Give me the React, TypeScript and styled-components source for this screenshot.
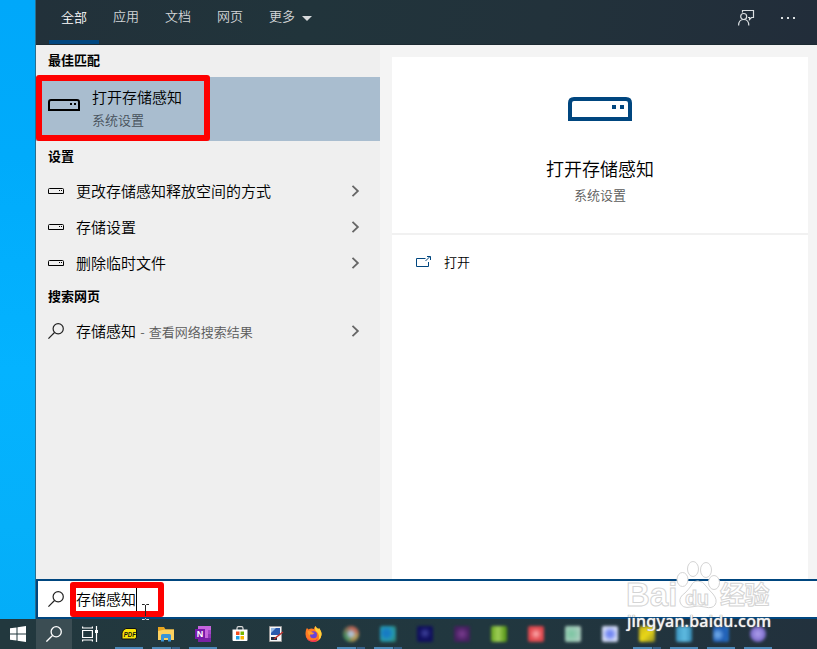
import React from "react";
import styled, { createGlobalStyle } from "styled-components";

const Global = createGlobalStyle`
  * { box-sizing: border-box; }
  html, body { margin: 0; padding: 0; overflow: hidden; }
  body { font-family: "Noto Sans CJK SC", sans-serif; font-weight: 350; color: #000; }
  svg { display: block; flex: none; }
`;

const Screen = styled.div`
  position: relative;
  width: 817px;
  height: 649px;
  overflow: hidden;
  display: flex;
  flex-direction: column;
`;

const Desktop = styled.div`
  height: 619px;
  padding-left: 35px;
  background: linear-gradient(180deg, #00a8fa 0, #00abfb 25%, #04b3ff 60%, #05b0fa 85%, #04adf8 100%);
`;

const SearchWindow = styled.main`
  height: 619px;
  border-left: 1px solid #2b6e8e;
  display: flex;
  flex-direction: column;
`;

const Header = styled.header`
  height: 45px;
  flex: none;
  display: flex;
  justify-content: space-between;
  padding: 0 21px 0 13px;
  background: linear-gradient(100deg, #22313a 0, #21343b 35%, #22323b 65%, #222d3a 100%);
  border-bottom: 1px solid #1c2a32;
`;

const Tabs = styled.nav`
  display: flex;
  height: 44px;
  gap: 2px;
`;

const Tab = styled.div<{ $active?: boolean }>`
  height: 44px;
  padding: ${(p) => (p.$active ? 8 : 7)}px 12px 0;
  display: flex;
  align-items: flex-start;
  gap: 7px;
  font-size: 13px;
  line-height: 18px;
  color: ${(p) => (p.$active ? "#fff" : "#d3d6d8")};
  border-bottom: 4px solid ${(p) => (p.$active ? "#00467f" : "transparent")};
`;

const TabArrow = styled.svg`
  margin-top: 9px;
`;

const HeaderTools = styled.div`
  display: flex;
  gap: 25px;
  padding-top: 9px;
`;

const Body = styled.div`
  height: 534px;
  flex: none;
  display: flex;
  background: #f4f4f4;
`;

const Results = styled.section`
  width: 344px;
  background: #efefef;
`;

const SectionTitle = styled.h2`
  margin: 0;
  height: 32px;
  padding-left: 12px;
  font-size: 13px;
  font-weight: 700;
  line-height: 29px;
`;

const BestMatch = styled.div`
  height: 64px;
  padding: 8px 12px 0;
  display: flex;
  gap: 12px;
  background: #a9bdcf;
`;

const BestIcon = styled.div`
  padding-top: 14px;
`;

const BestTitle = styled.div`
  font-size: 15px;
  line-height: 24px;
`;

const BestSub = styled.div`
  font-size: 13px;
  line-height: 22px;
  color: #46505a;
`;

const ResultRow = styled.div`
  height: 36px;
  padding: 0 20px 0 12px;
  display: flex;
  align-items: center;
`;

const RowLabel = styled.div`
  flex: 1;
  padding-left: 12px;
  font-size: 15px;
  line-height: 36px;
  height: 36px;
  white-space: pre;
`;

const Hint = styled.span`
  font-size: 13px;
  color: #5a5a5a;
  word-spacing: 1.3px;
`;

const Preview = styled.section`
  width: 416px;
  margin: 12px 0 0 12px;
  background: #fff;
`;

const PreviewHero = styled.div`
  height: 178px;
  padding-top: 40px;
  display: flex;
  flex-direction: column;
  align-items: center;
  border-bottom: 2px solid #f1f1f1;
`;

const PreviewTitle = styled.div`
  margin-top: 33px;
  font-size: 18px;
  line-height: 28px;
`;

const PreviewSub = styled.div`
  font-size: 13px;
  line-height: 26px;
  color: #5a5a5a;
`;

const Action = styled.div`
  height: 54px;
  padding-left: 24px;
  display: flex;
  align-items: center;
  gap: 13px;
  font-size: 13px;
  line-height: 54px;
`;

const SearchBar = styled.div`
  height: 40px;
  flex: none;
  border: 2px solid #00467f;
  border-right: 0;
  background: #fff;
  padding-left: 10px;
  display: flex;
  align-items: center;
  gap: 12px;
`;

const Query = styled.div`
  height: 24px;
  border-right: 1px solid #000;
  font-size: 15px;
  line-height: 24px;
`;

const Taskbar = styled.footer`
  height: 30px;
  display: flex;
  background: linear-gradient(90deg, #22383e 0, #21373f 60%, #22313d 100%);
`;

const SystemCell = styled.div<{ $lit?: boolean }>`
  width: 36px;
  height: 30px;
  display: flex;
  align-items: center;
  justify-content: center;
  background: ${(p) => (p.$lit ? "#3b4d53" : "transparent")};
`;

const Apps = styled.div`
  display: flex;
  padding-left: 2px;
`;

const AppCell = styled.div`
  width: 37px;
  height: 30px;
  display: flex;
  flex-direction: column;
  align-items: center;
  justify-content: space-between;
  padding-top: 7px;
`;

const RunMark = styled.div<{ $kind: "none" | "one" | "stack" }>`
  width: 28px;
  height: 2px;
  background: ${(p) =>
    p.$kind === "none"
      ? "transparent"
      : p.$kind === "one"
      ? "#4c89ba"
      : "linear-gradient(90deg, #4c89ba 0 19px, #29465a 19px 20px, #36618a 20px)"};
`;

const Blob = styled.div<{ $bg: string; $round?: boolean }>`
  width: 16px;
  height: 16px;
  border-radius: ${(p) => (p.$round ? "50%" : "2px")};
  background: ${(p) => p.$bg};
  filter: blur(1.6px);
`;

const Highlight = styled.div<{ $x: number; $y: number; $w: number; $h: number }>`
  position: absolute;
  left: ${(p) => p.$x}px;
  top: ${(p) => p.$y}px;
  width: ${(p) => p.$w}px;
  height: ${(p) => p.$h}px;
  border: 6px solid #fe0000;
  border-radius: 3px;
`;

const Pointer = styled.svg`
  position: absolute;
  left: 141px;
  top: 603px;
`;

const Watermark = styled.div`
  position: absolute;
  left: 626px;
  top: 560px;
  width: 150px;
  height: 72px;
`;

const MarkPaw = styled.svg`
  position: absolute;
  left: 49px;
  top: 0;
`;

const MarkText = styled.span<{ $x: number; $y: number; $size: number; $gap?: number }>`
  position: absolute;
  left: ${(p) => p.$x}px;
  top: ${(p) => p.$y}px;
  font-family: "Liberation Sans", "Noto Sans CJK SC", sans-serif;
  font-weight: 700;
  font-size: ${(p) => p.$size}px;
  line-height: 26px;
  letter-spacing: ${(p) => p.$gap || 0}px;
  color: #fff;
  -webkit-text-stroke: 1px #d4d4d4;
  white-space: nowrap;
`;

const MarkUrl = styled.span`
  position: absolute;
  left: 1px;
  top: 51px;
  font-family: "Noto Sans", sans-serif;
  font-size: 16px;
  font-weight: 500;
  line-height: 20px;
  letter-spacing: 0.2px;
  color: #f4f4f4;
  text-shadow: 0 0 1px #999, 0 0 1px #999;
  white-space: nowrap;
`;

function DriveIcon({ size, color }: { size: "s" | "m" | "l"; color: string }) {
  if (size === "l")
    return (
      <svg width="64" height="24" viewBox="0 0 64 24">
        <path d="M2 22V6q0-4 4-4h52q4 0 4 4v16z" fill="none" stroke={color} strokeWidth="4" />
        <path d="M44 8h4v4h-4zM52 8h4v4h-4z" fill={color} />
      </svg>
    );
  if (size === "m")
    return (
      <svg width="32" height="12" viewBox="0 0 32 12">
        <path d="M1 11V3q0-2 2-2h26q2 0 2 2v8z" fill="none" stroke={color} strokeWidth="2" />
        <path d="M22 4h2v2h-2zM26 4h2v2h-2z" fill={color} />
      </svg>
    );
  return (
    <svg width="16" height="6" viewBox="0 0 16 6">
      <path d="M.5 5.5V1.5q0-1 1-1h13q1 0 1 1v4z" fill="none" stroke={color} />
      <path d="M11 2h1v1h-1zM13 2h1v1h-1z" fill={color} />
    </svg>
  );
}

function Magnifier({ color, width = 1.2 }: { color: string; width?: number }) {
  return (
    <svg width="16" height="16" viewBox="0 0 16 16" fill="none" stroke={color} strokeWidth={width}>
      <circle cx="10.2" cy="5.8" r="5.1" />
      <path d="M6.5 9.5.4 15.6" />
    </svg>
  );
}

function Chevron() {
  return (
    <svg width="9" height="12" viewBox="0 0 9 12">
      <path d="m1.5 .8 5.4 5.2-5.4 5.2" fill="none" stroke="#666" strokeWidth="1.8" />
    </svg>
  );
}

function PdfIcon() {
  return (
    <svg width="16" height="16" viewBox="0 0 16 16">
      <path d="M5 2.500h9q1.500 0 1.500 1.500v7q0 2-2 2H1V7q1-4 4-4.500" fill="#f8e408" stroke="#111" />
      <text x="2.800" y="11" fontFamily="Liberation Sans" fontSize="7" fontStyle="italic" fontWeight="700" fill="#111" textLength="12" lengthAdjust="spacingAndGlyphs">PDF</text>
    </svg>
  );
}

function FolderIcon() {
  return (
    <svg width="18" height="16" viewBox="0 0 18 16">
      <path d="M1 1h6l1.500 2.500H17V7H1z" fill="#e9a51e" />
      <path d="M1 5l7-1.500h9V14H1z" fill="#fcd160" />
      <path d="M4 15.500V9.500q0-1.500 1.500-1.500h7q1.500 0 1.500 1.500v6h-3V12H7v3.500z" fill="#3a94d8" />
    </svg>
  );
}

function OneNoteIcon() {
  return (
    <svg width="16" height="16" viewBox="0 0 16 16">
      <path d="M3 0h13v16H3z" fill="#c665dd" />
      <path d="M13 4h3v4h-3z" fill="#a548c9" />
      <path d="M13 8h3v4h-3z" fill="#8f38b7" />
      <path d="M3 12h13v4H3z" fill="#7922a5" />
      <path d="M0 3h10v10H0z" fill="#7719aa" />
      <text x="1.800" y="11.300" fontFamily="Liberation Sans" fontSize="9" fontWeight="700" fill="#fff">N</text>
    </svg>
  );
}

function StoreIcon() {
  return (
    <svg width="16" height="16" viewBox="0 0 16 16">
      <path d="M5 4V2.200Q5 .7 6.500.7h3q1.500 0 1.500 1.500V4" fill="none" stroke="#ddd" strokeWidth="1.200" />
      <path d="M.5 3.500h15V14q0 1-1 1h-13q-1 0-1-1z" fill="#fff" />
      <path d="M4 5.500h3.500V9H4z" fill="#f04c1f" />
      <path d="M8.500 5.500H12V9H8.500z" fill="#78b800" />
      <path d="M4 10h3.500v3.500H4z" fill="#1ba0e8" />
      <path d="M8.500 10H12v3.500H8.500z" fill="#f8b400" />
    </svg>
  );
}

function RunIcon() {
  return (
    <svg width="17" height="16" viewBox="0 0 17 16">
      <path d="M1.500.5h12v15h-12z" fill="#f4f6f8" stroke="#999" />
      <path d="M3 2h9v7H3z" fill="#2959ad" />
      <path d="M3 2h5L3 7z" fill="#94b8e3" />
      <path d="M3 11h6v3H3z" fill="#202b44" />
      <path d="m6 13 9-7" stroke="#bd302d" strokeWidth="1.500" />
    </svg>
  );
}

function FirefoxIcon() {
  return (
    <svg width="17" height="16" viewBox="0 0 17 16">
      <path d="M1 4q.5-1.500 1-2l1.500 1.500Q6 2 9 3 9 1 10.500 0q1 2.500 3 3l.5-1q3 4 2.500 7-1 7-8 7-8-1-8-8Q.5 6 1 4" fill="#ff7a24" />
      <path d="M10.500 0q1 2.500 3 3l.5-1q3 4 2.500 7-.5 3.500-3 5 1.500-5-1.500-8Q9 4 10.500 0" fill="#ffd338" />
      <path d="M.7 8q1 6 6 6.500 4 .5 6-2-1 3.500-4.500 3.500-7-1-7.500-8" fill="#ef2a5b" />
      <circle cx="8.500" cy="8.700" r="3.500" fill="#6a43d8" />
      <path d="M2.500 5q3-.5 5 1.500l2 .5-2 1.500H6Q4 8 5 10 2.500 8 2.500 5" fill="#ff9c2a" />
    </svg>
  );
}

type Mark = "none" | "one" | "stack";

const apps: { icon: React.ReactNode; mark: Mark }[] = [
  { icon: <PdfIcon />, mark: "one" },
  { icon: <FolderIcon />, mark: "stack" },
  { icon: <OneNoteIcon />, mark: "one" },
  { icon: <StoreIcon />, mark: "none" },
  { icon: <RunIcon />, mark: "none" },
  { icon: <FirefoxIcon />, mark: "none" },
  {
    icon: <Blob $round $bg="radial-gradient(circle, #aebfd2 0 20%, transparent 45%), conic-gradient(#bd6754 0 17%, #b59a55 30%, #a88f4e 45%, #4b9260 60%, #508458 75%, #b66152)" />,
    mark: "stack",
  },
  { icon: <Blob $bg="radial-gradient(circle at 40% 45%, #177cc3 0 25%, #2398b4 50%, #2f8778 85%)" />, mark: "stack" },
  { icon: <Blob $bg="radial-gradient(circle at 50% 45%, #4144a0, #10105e 50%)" />, mark: "none" },
  { icon: <Blob $bg="radial-gradient(circle, #7d3d91, #44205f 65%)" />, mark: "none" },
  { icon: <Blob $bg="linear-gradient(90deg, #67a51f, #a0cf58 45%, #4c8d0e)" />, mark: "none" },
  { icon: <Blob $bg="radial-gradient(circle, #ffb1b1, #e34f55 50%, #d33b40)" />, mark: "none" },
  { icon: <Blob $bg="radial-gradient(circle at 40% 50%, #78c5a0, #a4cdbb 65%, #c1d0ca)" />, mark: "none" },
  { icon: <Blob $bg="radial-gradient(circle, #7186f4 0 20%, #d4dcf7 65%)" />, mark: "none" },
  { icon: <Blob $bg="linear-gradient(135deg, #c6b218, #ead817 50%, #918d23)" />, mark: "stack" },
  { icon: <Blob $bg="linear-gradient(90deg, #3c96c1, #60bce2 55%, #348ab5)" />, mark: "one" },
  { icon: <Blob $bg="radial-gradient(circle at 30% 55%, #6aa5e6 0 12%, #1d5cb4 50%, #2b78c5)" />, mark: "one" },
  { icon: <Blob $round $bg="radial-gradient(circle, #b0a1ee, #7464c5 75%)" />, mark: "one" },
];

const settings = ["更改存储感知释放空间的方式", "存储设置", "删除临时文件"];

export default function App() {
  return (
    <Screen>
      <Global />
      <Desktop>
        <SearchWindow>
          <Header>
            <Tabs>
              <Tab $active>全部</Tab>
              <Tab>应用</Tab>
              <Tab>文档</Tab>
              <Tab>网页</Tab>
              <Tab>
                更多
                <TabArrow width="10" height="5" viewBox="0 0 10 5">
                  <path d="M0 0h10L5 5z" fill="#d7dadc" />
                </TabArrow>
              </Tab>
            </Tabs>
            <HeaderTools>
              <svg width="17" height="17" viewBox="0 0 17 17" fill="none" stroke="#dce0e2" strokeWidth="1.2">
                <path d="M4.500 3.500v-2h11v7h-2l-2 2v-2H10" />
                <circle cx="5.700" cy="7.500" r="3" />
                <path d="M.6 16.500q0-6 5.100-6t5.100 6" />
              </svg>
              <svg width="16" height="17" viewBox="0 0 16 17">
                <path d="M1 8h2v2H1zM7 8h2v2H7zM13 8h2v2h-2z" fill="#dce0e2" />
              </svg>
            </HeaderTools>
          </Header>
          <Body>
            <Results>
              <SectionTitle>最佳匹配</SectionTitle>
              <BestMatch>
                <BestIcon>
                  <DriveIcon size="m" color="#000" />
                </BestIcon>
                <div>
                  <BestTitle>打开存储感知</BestTitle>
                  <BestSub>系统设置</BestSub>
                </div>
              </BestMatch>
              <SectionTitle>设置</SectionTitle>
              {settings.map((label) => (
                <ResultRow key={label}>
                  <DriveIcon size="s" color="#000" />
                  <RowLabel>{label}</RowLabel>
                  <Chevron />
                </ResultRow>
              ))}
              <SectionTitle>搜索网页</SectionTitle>
              <ResultRow>
                <Magnifier color="#222" />
                <RowLabel>
                  存储感知<Hint> - 查看网络搜索结果</Hint>
                </RowLabel>
                <Chevron />
              </ResultRow>
            </Results>
            <Preview>
              <PreviewHero>
                <DriveIcon size="l" color="#00467f" />
                <PreviewTitle>打开存储感知</PreviewTitle>
                <PreviewSub>系统设置</PreviewSub>
              </PreviewHero>
              <Action>
                <svg width="15" height="12" viewBox="0 0 15 12" fill="none" stroke="#00467f">
                  <path d="M9.500 2.500H.5v8h12V6M9.500 5l4.500-4.500M11 .5h3.500V4" />
                </svg>
                打开
              </Action>
            </Preview>
          </Body>
          <SearchBar>
            <Magnifier color="#222" />
            <Query>存储感知</Query>
          </SearchBar>
        </SearchWindow>
      </Desktop>
      <Taskbar>
        <SystemCell>
          <svg width="16" height="16" viewBox="0 0 16 16" fill="#fff">
            <path d="M0 2.300 6.500 1.400v6.100H0zM7.500 1.200 16 0v7.500H7.500zM0 8.500h6.500v6.100L0 13.700zM7.500 8.500H16V16l-8.500-1.200z" />
          </svg>
        </SystemCell>
        <SystemCell $lit>
          <Magnifier color="#fff" width={1.3} />
        </SystemCell>
        <SystemCell>
          <svg width="16" height="16" viewBox="0 0 16 16" fill="none" stroke="#fff" strokeWidth="1.200">
            <path d="M.6 4.500h9.800v7H.6zM.6.500V2h9.800V.5M.6 15.500V14h9.800v1.500M14.500 0v16" />
            <path d="M13 4h3v3h-3z" fill="#fff" stroke="none" />
          </svg>
        </SystemCell>
        <Apps>
          {apps.map((app, i) => (
            <AppCell key={i}>
              {app.icon}
              <RunMark $kind={app.mark} />
            </AppCell>
          ))}
        </Apps>
      </Taskbar>
      <Highlight $x={36} $y={75} $w={174} $h={66} />
      <Highlight $x={70} $y={582} $w={94} $h={35} />
      <Pointer width="9" height="18" viewBox="0 0 9 18" fill="none" stroke="#222">
        <path d="M1 1.500h2.500l1 1 1-1H8M4.500 2v11" />
        <path d="M1 16.500h2.500l1-1 1 1H8" stroke="#ddd" />
      </Pointer>
      <Watermark>
        <MarkText $x={0} $y={22} $size={33}>Bai</MarkText>
        <MarkPaw width="46" height="50" viewBox="0 0 46 50" fill="#fff" stroke="#d4d4d4">
          <ellipse cx="7.500" cy="19.500" rx="5.500" ry="7" />
          <ellipse cx="18" cy="9" rx="5.500" ry="7.500" />
          <ellipse cx="31" cy="10" rx="5.500" ry="7.500" />
          <ellipse cx="39" cy="22.500" rx="5.500" ry="7" />
          <path d="M23 21q5 0 8 5 3 4 7 8 5 6 2 11-3 4-10 2-7-2-14 0-9 2-11-5-1-5 5-9 3-3 6-7 2-5 7-5z" />
        </MarkPaw>
        <MarkText $x={59} $y={25} $size={20} $gap={-0.5}>du</MarkText>
        <MarkText $x={94} $y={22} $size={25} $gap={-0.5}>经验</MarkText>
        <MarkUrl>jingyan.baidu.com</MarkUrl>
      </Watermark>
    </Screen>
  );
}
